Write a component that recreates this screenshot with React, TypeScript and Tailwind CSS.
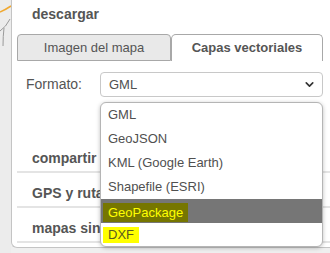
import { ChevronDown } from 'lucide-react';

const options = ['GML', 'GeoJSON', 'KML (Google Earth)', 'Shapefile (ESRI)'];
const sections = ['compartir', 'GPS y rutas', 'mapas sin conexión'];

function MapStrip() {
  return (
    <svg width="11" height="253" viewBox="0 0 11 253" className="shrink-0 bg-[#ececec]">
      <path d="M0 12 Q5 10 11 6" stroke="#f0a830" strokeWidth="1.6" fill="none" />
      <path d="M0 31 Q6 27 10 19" stroke="#9a9a9a" strokeWidth="1" fill="none" />
      <path d="M4 28 Q3 36 3 46" stroke="#9a9a9a" strokeWidth="1" fill="none" />
    </svg>
  );
}

function Dropdown() {
  return (
    <div className="absolute left-[100px] top-[102px] w-[223px] h-[145px] bg-white border border-[#b5b5b5] rounded-[6px] shadow-[0_1px_4px_rgba(0,0,0,0.25)] overflow-hidden text-[13px] text-[#505050]">
      {options.map((o) => (
        <div key={o} className="h-[24px] flex items-center pl-[7px]">
          {o}
        </div>
      ))}
      <div className="h-[24px] flex items-center pl-[2px] bg-[#767676]">
        <span className="h-[19px] flex items-center px-[5px] bg-[#767600] text-[#ffff00] mt-[3px]">GeoPackage</span>
      </div>
      <div className="h-[24px] flex items-center pl-[2px]">
        <span className="h-[16px] flex items-center px-[5px] bg-[#ffff00] text-[#5a5a20]">DXF</span>
      </div>
    </div>
  );
}

export default function App() {
  return (
    <div
      className="relative w-[330px] h-[253px] overflow-hidden flex bg-[#efefef]"
      style={{ fontFamily: '"Liberation Sans", Arial, sans-serif' }}
    >
      <MapStrip />
      <div className="flex-1 h-[248px] bg-white border-l border-b border-[#c4c4c4] rounded-bl-[6px] text-[#555]">
        <div className="h-[28px] flex items-center pl-[20px] text-[14px] font-bold">descargar</div>

        <div className="mt-[6px] ml-[5px] flex h-[27px] text-[13px]">
          <div className="w-[154px] flex items-center justify-center bg-[#e9e9e9] border border-[#a8a8a8] rounded-t-[4px]">
            Imagen del mapa
          </div>
          <div className="w-[152px] flex items-center justify-center font-bold bg-white border border-b-0 border-[#a8a8a8] rounded-t-[5px]">
            Capas vectoriales
          </div>
        </div>

        <div className="mt-[11px] flex items-center">
          <span className="w-[88px] pl-[14px] text-[14px]">Formato:</span>
          <div className="w-[223px] h-[25px] flex items-center justify-between pl-[8px] pr-[6px] border border-[#c8c8c8] rounded-[4px] text-[13px] text-[#505050]">
            <span>GML</span>
            <ChevronDown size={13} strokeWidth={3} className="text-[#333]" />
          </div>
        </div>

        <div className="mt-[41px]">
          {sections.map((s) => (
            <div key={s} className="ml-[5px] pl-[15px] pt-[12px] pb-[5px] leading-[16px] text-[14px] font-bold border-b-2 border-[#e4e4e4]">
              <div className="w-[68px] overflow-hidden whitespace-nowrap">{s}</div>
            </div>
          ))}
        </div>
      </div>
      <Dropdown />
    </div>
  );
}
